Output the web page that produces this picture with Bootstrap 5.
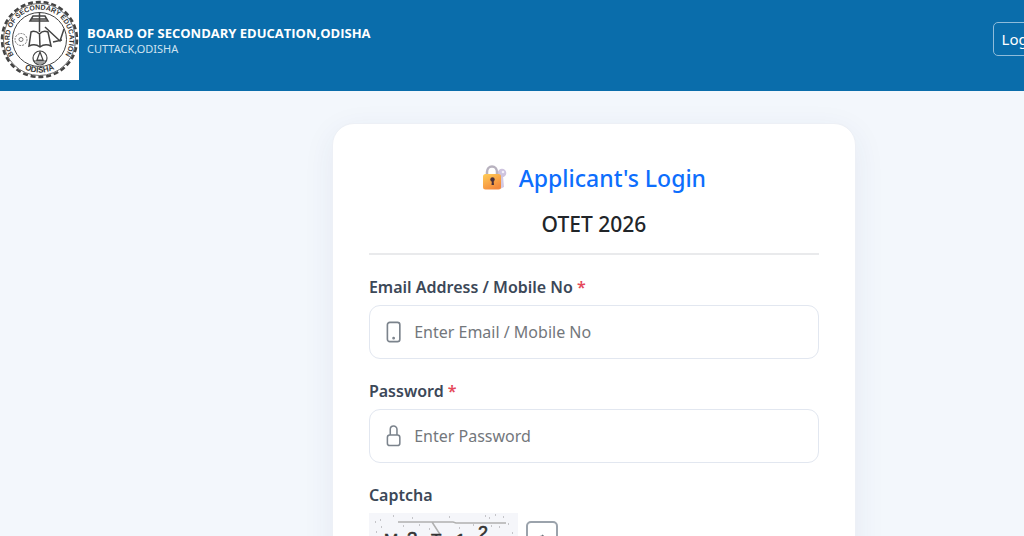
<!DOCTYPE html>
<html lang="en">
<head>
<meta charset="utf-8">
<meta name="viewport" content="width=device-width, initial-scale=1">
<title>Applicant's Login</title>
<link rel="stylesheet" href="https://cdn.jsdelivr.net/npm/bootstrap@5.3.0/dist/css/bootstrap.min.css">
<style>
body { font-family: "Noto Sans", "Open Sans", sans-serif; background: #f3f7fc; height: 100vh; overflow: hidden; }
/* the page is wider than the window and runs off its right edge */
.page-wide { width: 116vw; }
.site-header { background: #0a6dab; min-height: 91px; }
.emblem { width: 79px; height: 80px; }
.board-name { font-family: "Open Sans", "Noto Sans", sans-serif; font-size: 13px; line-height: 18px; font-weight: 700; }
.board-city { font-size: 11px; line-height: 13px; color: #cfe2f0; }
.btn-top { font-size: 15px; line-height: 20px; padding: 6px 8px; border-radius: 5px; border-color: #8fbcda; margin-right: 138px; margin-top: 22px; }
.login-card { width: 524px; border: 1px solid #edf0f6; border-radius: 22px; box-shadow: 0 8px 32px rgba(40,60,110,.07); padding: 36px; }
.login-title { font-size: 23px; line-height: 36px; font-weight: 500; color: #0d6efd; margin-bottom: 14px; }
.exam-title { font-size: 21px; line-height: 28px; font-weight: 500; color: #212529; }
.head-rule { border-bottom: 2px solid #e9eaec; padding-bottom: 15px; }
.form-label { font-size: 16px; line-height: 24px; font-weight: 600; color: #3c4858; margin-bottom: 6px; }
.star { color: #e5485a; }
.field { border: 1px solid #e2e7f0; border-radius: 11px; height: 54px; padding-left: 15px; }
.field .form-control { font-size: 16px; }
.field .form-control::placeholder { color: #73777c; }
.captcha-art { width: 149px; height: 60px; }
.btn-refresh { width: 32px; height: 38px; border: 2px solid #9ba3ac; border-radius: 5px; }
</style>
</head>
<body>
<div class="page-wide">
  <header class="site-header d-flex align-items-start text-white">
    <svg class="emblem flex-shrink-0" viewBox="0 0 79 80" role="img" aria-label="Board emblem">
      <defs>
        <path id="ring" d="M21.500 63.500A30 30 0 1 1 57.500 63.500"/>
        <path id="ringlow" d="M17 64A33.500 33.500 0 0 0 62 64"/>
      </defs>
      <rect width="79" height="80" fill="#fff"/>
      <g fill="none" stroke="#444">
        <circle cx="39.500" cy="39.500" r="37.500" stroke-width="2.500" stroke-dasharray="5 2.850"/>
        <circle cx="39.500" cy="39.500" r="36" stroke-width=".8"/>
        <circle cx="39.500" cy="39.500" r="27" stroke-width="1"/>
        <circle cx="21" cy="39.500" r="6" stroke="#777" stroke-dasharray="2 1"/>
        <circle cx="21" cy="39.500" r="2" stroke="#777"/>
        <path d="M30 21L33 16H45L48 21ZM31 19H47M39.500 12V32" stroke-width="1.500"/>
        <path d="M45 27L60 41L64 29M53 42L62 40" stroke-width="1.500"/>
        <path d="M31 32L29 46Q35 43 40 47Q45 43 51 46L48 32Q43 30 39.500 34Q35 30 31 32ZM39.500 34L40 47" stroke-width="1.500"/>
        <circle cx="40" cy="58" r="7" stroke-width="1.200"/>
        <path d="M34 61H46M36 63H44M40 52L37 60H43Z" stroke-width="1.200"/>
      </g>
      <g font-family="Liberation Sans, sans-serif" font-weight="700" fill="#333">
        <text font-size="7"><textPath href="#ring" startOffset="50%" text-anchor="middle">BOARD OF SECONDARY EDUCATION</textPath></text>
        <text font-size="8"><textPath href="#ringlow" startOffset="50%" text-anchor="middle">ODISHA</textPath></text>
      </g>
    </svg>
    <div class="ms-2 pt-4">
      <div class="board-name">BOARD OF SECONDARY EDUCATION,ODISHA</div>
      <div class="board-city">CUTTACK,ODISHA</div>
    </div>
    <button type="button" class="btn btn-top text-white ms-auto">Login</button>
  </header>

  <main class="pt-4 mt-2">
    <div class="login-card bg-white mx-auto">
      <div class="head-rule text-center">
        <h1 class="login-title d-flex justify-content-center align-items-center">
          <svg width="25" height="28" viewBox="0 0 25 28" class="me-2" aria-hidden="true">
            <defs><linearGradient id="gold" x2=".6" y2="1"><stop stop-color="#ffce58"/><stop offset="1" stop-color="#f4893c"/></linearGradient></defs>
            <path d="M19 12L18 25L22 23L21 12" fill="#d3c9e3"/>
            <circle cx="20" cy="9" r="4.300" fill="#cec4df"/><circle cx="21" cy="8" r="1.300" fill="#f3effa"/>
            <path d="M5 12V8A5 5.500 0 0 1 15 8V12" fill="none" stroke="#b8b2bf" stroke-width="2.500"/>
            <rect x="1" y="10" width="18" height="15.500" rx="2.500" fill="url(#gold)"/>
            <circle cx="10.500" cy="15.500" r="2.200" fill="#49303c"/><path d="M10 16H11.500L12 21H9.500Z" fill="#49303c"/>
          </svg>
          <span class="ms-1">Applicant's Login</span>
        </h1>
        <h2 class="exam-title mb-0">OTET 2026</h2>
      </div>
      <form>
        <div class="pt-3 mt-1 mb-3 pb-1">
          <label for="user" class="form-label">Email Address / Mobile No <span class="star">*</span></label>
          <div class="field d-flex align-items-center">
            <svg width="18" height="24" viewBox="0 0 18 24" fill="none" stroke="#7b838c" stroke-width="1.700" aria-hidden="true"><rect x="2.500" y="2" width="13" height="20" rx="2.500"/><circle cx="9" cy="18.500" r=".6" fill="#7b838c"/></svg>
            <input id="user" type="text" class="form-control border-0 bg-transparent" placeholder="Enter Email / Mobile No">
          </div>
        </div>
        <div class="mb-3 pb-1">
          <label for="pass" class="form-label">Password <span class="star">*</span></label>
          <div class="field d-flex align-items-center">
            <svg width="18" height="24" viewBox="0 0 18 24" fill="none" stroke="#7b838c" stroke-width="1.600" aria-hidden="true"><rect x="2.500" y="11" width="13" height="11" rx="2.500"/><path d="M5.500 11V5A3.500 3.500 0 0 1 12.500 5V11"/></svg>
            <input id="pass" type="password" class="form-control border-0 bg-transparent" placeholder="Enter Password">
          </div>
        </div>
        <div class="form-label">Captcha</div>
        <div class="d-flex align-items-start gap-2">
          <svg class="captcha-art" viewBox="0 0 149 60" role="img" aria-label="Captcha">
            <rect width="149" height="60" fill="#f5f6fa"/>
            <path d="M6 9h1M12 14h1M11 7h1M24 3h1M34 13h1M43 5h1M50 12h1M80 4h1M104 12h1M116 3h1M120 5h1M126 2h1M134 4h1M139 11h1M130 14h1M122 13h1M60 16h1M90 15h1M143 20h1M7 19h1" stroke="#b5b5b9" stroke-width="1.500"/>
            <path d="M29 9H84L87 10H137M63 9L72 23" fill="none" stroke="#b0b0b0" stroke-width="1.500"/>
            <g font-family="Liberation Sans, sans-serif" fill="#333" stroke="#333" stroke-width=".6"><text x="15" y="33" font-size="17">M</text><text x="38" y="32" font-size="19">3</text><text x="62" y="33" font-size="17">T</text><text x="87" y="33" font-size="17">1</text><text x="109" y="26" font-size="18">2</text></g>
          </svg>
          <button type="button" class="btn btn-refresh p-0 mt-2" aria-label="Refresh captcha"><svg width="16" height="16" viewBox="0 0 16 16" fill="none" stroke="#6c757d" stroke-width="1.600"><path d="M13 5A6 6 0 1 0 14 9M8 1L11 4L8 7"/></svg></button>
        </div>
      </form>
    </div>
  </main>
</div>
<script src="https://cdn.jsdelivr.net/npm/bootstrap@5.3.0/dist/js/bootstrap.bundle.min.js"></script>
</body>
</html>
